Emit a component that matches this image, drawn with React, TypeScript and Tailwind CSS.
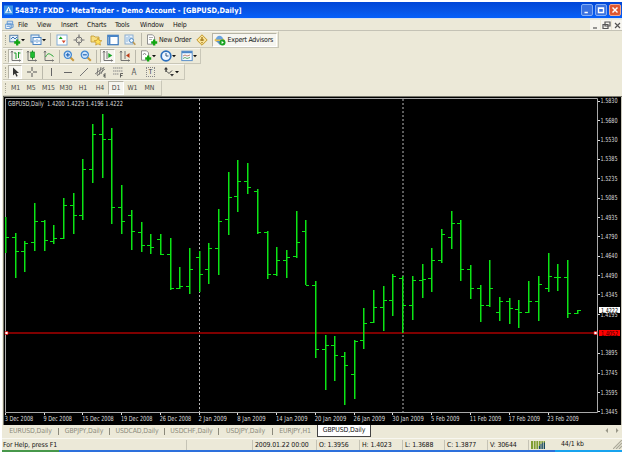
import type { ReactNode } from 'react';

const FONT = "font-['DejaVu_Sans_Condensed','DejaVu_Sans',sans-serif]";

// [high, low, open, close] as plot ordinates
const bars: [number, number, number | null, number][] = [
  [217, 253, null, 237], [233, 278, 237, 251], [241, 272, 251, 243], [203, 251, 242, 221], [220, 251, 221, 240],
  [225, 244, 241, 238], [198, 239, 238, 205], [193, 234, 205, 215], [159, 220, 215, 169], [124, 183, 169, 134],
  [114, 178, 134, 139], [128, 224, 139, 207], [185, 234, 207, 221], [210, 250, 215, 231], [222, 252, 232, 245],
  [234, 254, 245, 247], [234, 255, 239, 254], [238, 290, 254, 288], [267, 289, 288, 286], [248, 294, 286, 269],
  [251, 292, 257, 274], [243, 284, 269, 248], [209, 275, 248, 221], [172, 235, 219, 197], [160, 212, 196, 181],
  [163, 194, 181, 187], [189, 234, 191, 232], [231, 279, 232, 274], [247, 276, 274, 260], [250, 278, 260, 257],
  [211, 258, 256, 242], [220, 285, 231, 285], [281, 358, 285, 349], [335, 390, 349, 345], [336, 381, 345, 355],
  [352, 405, 356, 365], [340, 399, 374, 341], [308, 349, 340, 323], [290, 323, 322, 307], [286, 331, 307, 300],
  [274, 316, 300, 276], [276, 333, 278, 305], [276, 320, 305, 280], [264, 298, 280, 279], [248, 292, 278, 260],
  [229, 263, 260, 234], [211, 249, 237, 223], [220, 281, 223, 269], [265, 299, 269, 288], [285, 322, 288, 305],
  [260, 307, 305, 288], [297, 321, 312, 301], [298, 324, 301, 308], [300, 328, 309, 312], [281, 313, 312, 301],
  [276, 321, 301, 284], [253, 292, 288, 276], [264, 291, 277, 277], [260, 318, 277, 313], [310, 314, 313, 310],
];

const prices: [string, number][] = [
  ['1.5830', 100.5], ['1.5680', 120], ['1.5530', 139.5], ['1.5385', 158.5], ['1.5235', 178], ['1.5085', 197.5],
  ['1.4935', 217], ['1.4790', 236], ['1.4640', 255.5], ['1.4490', 275], ['1.4345', 294], ['1.4195', 314],
  ['1.3895', 352.5], ['1.3745', 372.5], ['1.3595', 392], ['1.3445', 411],
];

const dates = [
  '3 Dec 2008', '9 Dec 2008', '15 Dec 2008', '19 Dec 2008', '26 Dec 2008', '2 Jan 2009', '8 Jan 2009', '14 Jan 2009',
  '20 Jan 2009', '26 Jan 2009', '30 Jan 2009', '5 Feb 2009', '11 Feb 2009', '17 Feb 2009', '23 Feb 2009',
];

function Chart() {
  return (
    <svg viewBox="3 96 619 329" className={`block h-[329px] w-[619px] text-[7px] ${FONT}`}>
      <rect x="3" y="96" width="619" height="329" fill="#000" />
      <path d="M3.5 425V96.5H622" fill="none" stroke="#77766c" />
      <path d="M5.5 412.5V98.5H597.5V412.5Z" fill="none" stroke="#a9a9a9" />
      <path d="M621.5 97V425" stroke="#c9c7ba" />
      <g stroke="#b8b8b8" strokeDasharray="2 2">
        <path d="M199.5 99V412" />
        <path d="M403 99V412" />
      </g>
      <path d="M6 333H597" stroke="#a80000" strokeWidth="1.4" />
      <g fill="#0be414">
        {bars.map(([h, l, o, c], i) => {
          const x = Math.floor(5.4 + i * 9.69);
          return (
            <g key={i}>
              <rect x={x} y={h} width="1.5" height={l - h} />
              {o !== null && <rect x={x - 3} y={o} width="3" height="1" />}
              <rect x={x + 1} y={c} width="3" height="1" />
            </g>
          );
        })}
      </g>
      <g fill="#dedede">
        <text x="8" y="106" textLength="115" lengthAdjust="spacingAndGlyphs">
          {'GBPUSD,Daily\u00a0 1.4200 1.4229 1.4196 1.4222'}
        </text>
        {prices.map(([p, y]) => (
          <g key={p}>
            <rect x="598" y={Math.round(y)} width="2" height="1" />
            <text x="600.5" y={y + 2.5} textLength="17" lengthAdjust="spacingAndGlyphs">{p}</text>
          </g>
        ))}
        {dates.map((d, i) => (
          <g key={d}>
            <rect x={Math.floor(5.4 + i * 38.76)} y="413" width="1" height="2" />
            <text x={4.7 + i * 38.76} y="421" textLength={d.length === 10 ? 28.5 : 31.5} lengthAdjust="spacingAndGlyphs">{d}</text>
          </g>
        ))}
      </g>
      <rect x="599" y="307" width="21" height="6" fill="#fff" />
      <text x="601" y="312.5" textLength="17" lengthAdjust="spacingAndGlyphs" fill="#000">1.4222</text>
      <rect x="599" y="330" width="21" height="6" fill="#f00" />
      <text x="601" y="335.5" textLength="17" lengthAdjust="spacingAndGlyphs" fill="#300">1.4052</text>
      <path d="M5 331.5h3v3h-3zM594 331.5h3v3h-3z" fill="#fff" stroke="#d00" strokeWidth=".7" />
    </svg>
  );
}

function Icon({ ml = '', children }: { ml?: string; children: ReactNode }) {
  return (
    <svg viewBox="0 0 12 12" fill="none" className={`h-3 w-3 shrink-0 ${ml}`}>
      {children}
    </svg>
  );
}

function Caret() {
  return (
    <svg viewBox="0 0 4 12" className="h-3 w-1 shrink-0">
      <path d="M0 5h4L2 7.3z" fill="#111" />
    </svg>
  );
}

const Sep = ({ ml }: { ml: string }) => <div className={`h-[13px] w-px shrink-0 border-r border-[#bab8aa] ${ml}`} />;

const Plus = () => <path d="M8.2 5.5v6M5.2 8.5h6" stroke="#12a512" strokeWidth="2.3" />;

const Sheet = () => <path d="M1.5.8h5l2 2v7.4h-7z" fill="#fff" stroke="#777" strokeWidth=".8" />;

const Axes = () => <path d="M2 1v9.5h8.5M1 2.5L2 1l1 1.5M9.5 9.5l1 1-1 1" stroke="#666" strokeWidth=".9" />;

function Lens({ plus }: { plus?: boolean }) {
  return (
    <>
      <path d="M7.3 7.3l3.5 3.5" stroke="#c9983c" strokeWidth="2" />
      <circle cx="4.8" cy="4.8" r="3.6" fill="#cfe4fa" stroke="#3f86d0" strokeWidth="1.2" />
      <path d={plus ? 'M2.8 4.8h4M4.8 2.8v4' : 'M2.8 4.8h4'} stroke="#2468b8" strokeWidth="1.2" />
    </>
  );
}

function Bar({ w, h, children }: { w: string; h: string; children: ReactNode }) {
  return (
    <div className={`flex items-center border-b border-r border-[#c9c7b8] border-t border-t-[#f8f7f0] ${w} ${h}`}>
      <div className="ml-[2px] mr-px h-[10px] w-[2px] shrink-0 border-l border-dotted border-[#a9a797]" />
      {children}
    </div>
  );
}

const pressed = 'flex h-[14px] shrink-0 items-center justify-center border border-[#fff] border-l-[#b5b3a5] border-t-[#b5b3a5] bg-[#f6f5ef]';

function Toolbars() {
  return (
    <div className="h-[65px] pl-px">
      <Bar w="w-[276px]" h="h-[17px]">
        <Icon ml="ml-px">
          <rect x=".8" y="1.3" width="8" height="6.5" fill="#e6f0fb" stroke="#5b83aa" />
          <path d="M2 5l2-2 2 2 2-2" stroke="#3574b5" /><Plus />
        </Icon>
        <Caret />
        <Icon ml="ml-[5px]">
          <rect x="1" y="1" width="8" height="7" fill="#e6f0fb" stroke="#4c86c4" />
          <rect x="3" y="3.5" width="8" height="7" fill="#f4f9ff" stroke="#4c86c4" />
          <path d="M5 8v-2M7 9V5M9 8V6" stroke="#72a2d2" />
        </Icon>
        <Caret />
        <Sep ml="ml-1" />
        <Icon ml="ml-[5px]">
          <rect x="1" y="1" width="10" height="10" fill="#fff" stroke="#82aed8" />
          <path d="M2.7 5l2-2.4 2 2.4z" fill="#17a317" /><path d="M5.7 6.5h4L7.7 9.3z" fill="#d44c2f" />
        </Icon>
        <Icon ml="ml-[5px]">
          <circle cx="6" cy="6" r="3" stroke="#777" /><path d="M6 .5v4M6 7.5v4M.5 6h4M7.5 6h4" stroke="#777" strokeWidth="1.2" />
        </Icon>
        <Icon ml="ml-[5px]">
          <path d="M1 2h3l1 1h4v5H1z" fill="#f8df82" stroke="#c2972b" strokeWidth=".8" />
          <path d="M8 4l1.2 2.4 2.6.3-1.9 1.8.5 2.6L8 9.8l-2.3 1.3.4-2.6-1.9-1.8 2.6-.3z" fill="#ffe15c" stroke="#c69020" strokeWidth=".7" />
        </Icon>
        <Icon ml="ml-[5px]">
          <rect x=".8" y="1.3" width="10.4" height="9.4" fill="#fff" stroke="#3977bd" strokeWidth="1.2" />
          <path d="M1 2h10M2.5 2v8" stroke="#4884c6" strokeWidth="1.8" />
        </Icon>
        <Icon ml="ml-[5px]">
          <rect x="1" y="1" width="8" height="9" fill="#e8f1fa" stroke="#8aaed0" />
          <path d="M3 3v5M5 2v5M7 3v4" stroke="#90b8dc" /><circle cx="7.5" cy="6.5" r="2" fill="#eef7ff" stroke="#548cc5" /><path d="M9 8l2.3 2.7" stroke="#bd964e" strokeWidth="1.5" />
        </Icon>
        <Sep ml="ml-[5px]" />
        <Icon ml="ml-1"><Sheet /><path d="M3 3.5h4M3 5.5h3" stroke="#999" strokeWidth=".8" /><Plus /></Icon>
        <span className="ml-px w-[34px] shrink-0 whitespace-nowrap pt-px text-[7px] tracking-[-0.15px]">New Order</span>
        <Icon ml="ml-[3px]">
          <path d="M6 .8L11.2 6 6 11.2.8 6z" fill="#f8e29a" stroke="#c59a2a" /><path d="M6 3v4M6 8v1.3M4 6h4" stroke="#9c7110" strokeWidth="1.2" />
        </Icon>
        <div className={`ml-1 w-[65px] ${pressed}`}>
          <Icon>
            <ellipse cx="5.5" cy="6" rx="5" ry="2" fill="#e4bf4e" /><path d="M2 5.5C2 .5 9 .5 9 5.5z" fill="#6aa3df" /><path d="M2 7h6l-2 4z" fill="#5b90ce" />
            <circle cx="8.5" cy="8.5" r="3" fill="#18a221" /><path d="M7.6 7l2.3 1.5-2.3 1.5z" fill="#fff" />
          </Icon>
          <span className="ml-[2px] w-[48px] whitespace-nowrap pt-px text-[7px] tracking-[-0.25px]">Expert Advisors</span>
        </div>
      </Bar>
      <Bar w="w-[198px]" h="h-[16px]">
        <div className={`w-[15px] ${pressed}`}>
          <Icon><Axes /><path d="M6 3v6M6 3h-2M8.5 2v6M8.5 3h2" stroke="#1a9b28" /></Icon>
        </div>
        <Icon ml="ml-[3px]"><Axes /><path d="M6.5.5v9" stroke="#148b20" /><rect x="4.7" y="2" width="3.7" height="5.5" fill="#1dbd30" stroke="#148b20" strokeWidth=".7" /></Icon>
        <Icon ml="ml-[5px]"><Axes /><path d="M2.5 7C5 2.5 6 3 10.5 6.5" stroke="#23a332" /></Icon>
        <Sep ml="ml-1" />
        <Icon ml="ml-[3px]"><Lens plus /></Icon>
        <Icon ml="ml-[5px]"><Lens /></Icon>
        <Sep ml="ml-[4px]" />
        <div className={`ml-[3px] w-[15px] ${pressed}`}>
          <Icon><Axes /><path d="M5 1v8" stroke="#777" /><path d="M6.3 3l4 2.5-4 2.5z" fill="#16a425" /></Icon>
        </div>
        <Icon ml="ml-[4px]"><Axes /><path d="M6 1v8" stroke="#777" /><path d="M10.5 3v5L7 5.5z" fill="#bd3d16" /></Icon>
        <Sep ml="ml-[4px]" />
        <Icon ml="ml-1"><Sheet /><path d="M3 5l1.5-2L6 5" stroke="#777" strokeWidth=".8" /><Plus /></Icon>
        <Caret />
        <Icon ml="ml-[4px]"><circle cx="6" cy="6" r="4.8" fill="#edf6ff" stroke="#2c70be" strokeWidth="1.7" /><path d="M6 3v3h2.5" stroke="#32567e" /></Icon>
        <Caret />
        <Icon ml="ml-[5px]"><rect x=".8" y="1.2" width="10.4" height="9.4" fill="#f4f9ff" stroke="#5b91c9" /><path d="M1 2.2h10" stroke="#4b86c7" strokeWidth="2" /><path d="M2 6l2-1 2 1 3-1" stroke="#b96b50" strokeWidth=".8" /><path d="M2 8.5l2-1 2 1 3-1" stroke="#429746" strokeWidth=".8" /></Icon>
        <Caret />
      </Bar>
      <Bar w="w-[182px]" h="h-[16px]">
        <div className={`w-[14px] ${pressed}`}>
          <Icon><path d="M4 1.5v8l2-2 1.4 3.2 1.3-.6-1.4-3H10z" fill="#333" /></Icon>
        </div>
        <Icon ml="ml-[4px]"><path d="M6 1v4M6 7v4M1 6h4M7 6h4" stroke="#555" /></Icon>
        <Sep ml="ml-[4px]" />
        <Icon ml="ml-[2px]"><path d="M6.5 2v8" stroke="#666" /></Icon>
        <Icon ml="ml-[5px]"><path d="M2 6.5h8" stroke="#666" /></Icon>
        <Icon ml="ml-[4px]"><path d="M2 10l8-8" stroke="#777" /></Icon>
        <Icon ml="ml-[5px]"><path d="M0 8l8-6M2 10l8-7M3 2L2 9M6 1L4 9M9 1L6 8" stroke="#666" strokeWidth=".8" /><path d="M11 8H9v3h2M9 9.5h1.5" stroke="#444" strokeWidth=".8" /></Icon>
        <Icon ml="ml-[5px]"><path d="M1 2h10M1 5h10M1 8h6" stroke="#888" strokeDasharray="1.5 .5" /><path d="M8.5 11.5v-4H11M8.5 9.5h2" stroke="#444" strokeWidth=".8" /></Icon>
        <span className="ml-[4px] w-3 shrink-0 pt-px text-center text-[8px] text-[#555]">A</span>
        <span className="ml-[6px] flex h-[10px] w-[9px] shrink-0 items-center justify-center border border-dotted border-[#888] text-[7px] text-[#444]">T</span>
        <Icon ml="ml-[8px]"><path d="M1 3.5L3 1l2 2.5H3.7V6H2.4V3.5z" fill="#333" /><path d="M4 5.5l2 2 3-3" stroke="#444" /><path d="M7 8h4l-2 2.5z" fill="#333" /></Icon>
        <Caret />
      </Bar>
      <Bar w="w-[159px]" h="h-[16px]">
        <div className="grid h-[14px] shrink-0 grid-cols-[15px_16px_19px_16px_18px_16px_16px_17px_17px] items-center text-center text-[6.9px] tracking-[-0.1px] text-[#4a4a44]">
          {['M1', 'M5', 'M15', 'M30', 'H1', 'H4', 'D1', 'W1', 'MN'].map((t) => (
            <span key={t} className={t === 'D1' ? pressed : 'pt-px'}>{t}</span>
          ))}
        </div>
      </Bar>
    </div>
  );
}

function TitleBar() {
  return (
    <div className="flex h-4 items-center bg-linear-to-b from-[#0046d8] via-[#0753e4] to-[#0560fa] pl-[2px] pr-px">
      <svg viewBox="0 0 10 10" className="h-[10px] w-[9px]">
        <rect width="10" height="10" fill="#3d95e8" /><path d="M5 1L9 8H1z" fill="#fff" /><path d="M5 3.5v4M3 7h4" stroke="#3689d8" />
      </svg>
      <span className="ml-[2px] flex-1 whitespace-nowrap pt-px font-['DejaVu_Sans_Condensed','DejaVu_Sans',sans-serif] text-[7.4px] font-bold text-white">
        54837: FXDD - MetaTrader - Demo Account - [GBPUSD,Daily]
      </span>
      <div className="flex gap-[2px]">
        {['M3 9h4', 'M3 3.5h6v5.5H3zM3 4h6', 'M3 3l6 6M9 3l-6 6'].map((d, i) => (
          <svg key={d} viewBox="0 0 12 12" fill="none" className={`h-3 w-3 rounded-[2px] border ${i === 2 ? 'border-[#f0a890] bg-[#df5730]' : 'border-[#83adf5] bg-[#3b72e0]'}`}>
            <path d={d} stroke="#fff" strokeWidth="1.7" />
          </svg>
        ))}
      </div>
    </div>
  );
}

function MenuBar() {
  return (
    <div className="flex h-[12px] items-center border-b border-[#c4c2b5] text-[7px] tracking-[-0.2px]">
      <svg viewBox="0 0 10 10" fill="none" className="ml-[3px] h-[10px] w-[9px]">
        <path d="M2.5.8h6v4h-6zM.8 4h6v5h-6z" fill="#fff" stroke="#5590d0" /><path d="M2 6.5h3.5M3 3h5M5 7.5h4V4" stroke="#5590d0" />
      </svg>
      <div className="ml-[4px] grid flex-1 grid-cols-[19px_24px_26px_28px_25px_33px_20px] pt-px">
        {['File', 'View', 'Insert', 'Charts', 'Tools', 'Window', 'Help'].map((m) => <span key={m}>{m}</span>)}
      </div>
      <div className="flex gap-px">
        {['M3 8h4', 'M4 2h5v4H4zM2 4.5h5v4H2z', 'M3 3l5 5M8 3L3 8'].map((d) => (
          <svg key={d} viewBox="0 0 10 10" fill="none" className="h-[10px] w-[10px] bg-[#f6f5ef]"><path d={d} stroke="#555" strokeWidth="1.2" /></svg>
        ))}
      </div>
    </div>
  );
}

function Tabs() {
  return (
    <div className="flex h-[13px] items-start pl-px text-[6.9px] tracking-[-0.1px] text-[#8b897b]">
      <div className="grid grid-cols-[56px_51px_55px_54px_54px_44px_54px] text-center leading-[11px]">
        {['EURUSD,Daily', 'GBPJPY,Daily', 'USDCAD,Daily', 'USDCHF,Daily', 'USDJPY,Daily', 'EURJPY,H1'].map((t, i) => (
          <span key={t} className="flex items-center whitespace-nowrap">
            <span className="flex-1">{t}</span>
            {i < 5 && <span className="h-[7px] w-px bg-[#8b897b]" />}
          </span>
        ))}
        <span className="h-3 whitespace-nowrap border border-t-0 border-[#444] bg-white text-[#111]">GBPUSD,Daily</span>
      </div>
      <svg viewBox="0 0 14 10" className="ml-auto mr-[3px] h-[10px] w-[14px]"><path d="M3 3v5L.5 5.5zM11 3v5l2.5-2.5z" fill="#999788" /></svg>
    </div>
  );
}

function StatusBar() {
  return (
    <div className="flex h-[12px] items-center border-t border-[#f8f7f0] text-[6.9px] tracking-[-0.1px]">
      <div className="grid grid-cols-[184px_66px_64px_43px_43px_42px_43px_42px] whitespace-nowrap leading-[10px]">
        {['For Help, press F1', '', '2009.01.22 00:00', 'O: 1.3956', 'H: 1.4023', 'L: 1.3688', 'C: 1.3877', 'V: 30644'].map((t, i) => (
          <span key={i} className={i === 0 ? 'pl-px' : 'border-l border-[#c5c3b5] pl-[2px]'}>{t}</span>
        ))}
      </div>
      <div className="-ml-px flex h-[10px] w-[20px] items-center border-l border-[#c5c3b5] pl-[2px]">
        <svg viewBox="0 0 14 8" className="h-2 w-[14px]">
          <rect width="14" height="8" fill="#7f9d31" /><path d="M7 8V5h2V3h2V1.5h3V8z" fill="#16475f" />
          <path d="M2.5 0v8M5 0v8M7.5 0v8M10 0v8M12.3 0v8" stroke="#e8e8d0" strokeWidth=".8" />
        </svg>
      </div>
      <span className="ml-[13px]">44/1 kb</span>
      <svg viewBox="0 0 9 9" className="ml-auto h-[9px] w-[9px]"><path d="M0 9l9-9M3 9l6-6M6 9l3-3" stroke="#aaa899" strokeWidth="1.2" /></svg>
    </div>
  );
}

export default function App() {
  return (
    <div className={`h-[452px] w-[625px] overflow-hidden bg-white pt-[2px] text-[#151515] ${FONT}`}>
      <div className="ml-[2px] w-[620px] bg-[#ece9d8]">
        <TitleBar />
        <div className="h-px bg-[#d8e2ee]" />
        <MenuBar />
        <Toolbars />
        <div className="pl-px"><Chart /></div>
        <Tabs />
        <StatusBar />
      </div>
      <div className="ml-[2px] flex h-[3px] w-[620px]">
        <div className="w-[57px] bg-[#47984b]" />
        <div className="flex-1 bg-[#2d70dc]" />
        <div className="w-[67px] bg-[#18a3ee]" />
      </div>
    </div>
  );
}
